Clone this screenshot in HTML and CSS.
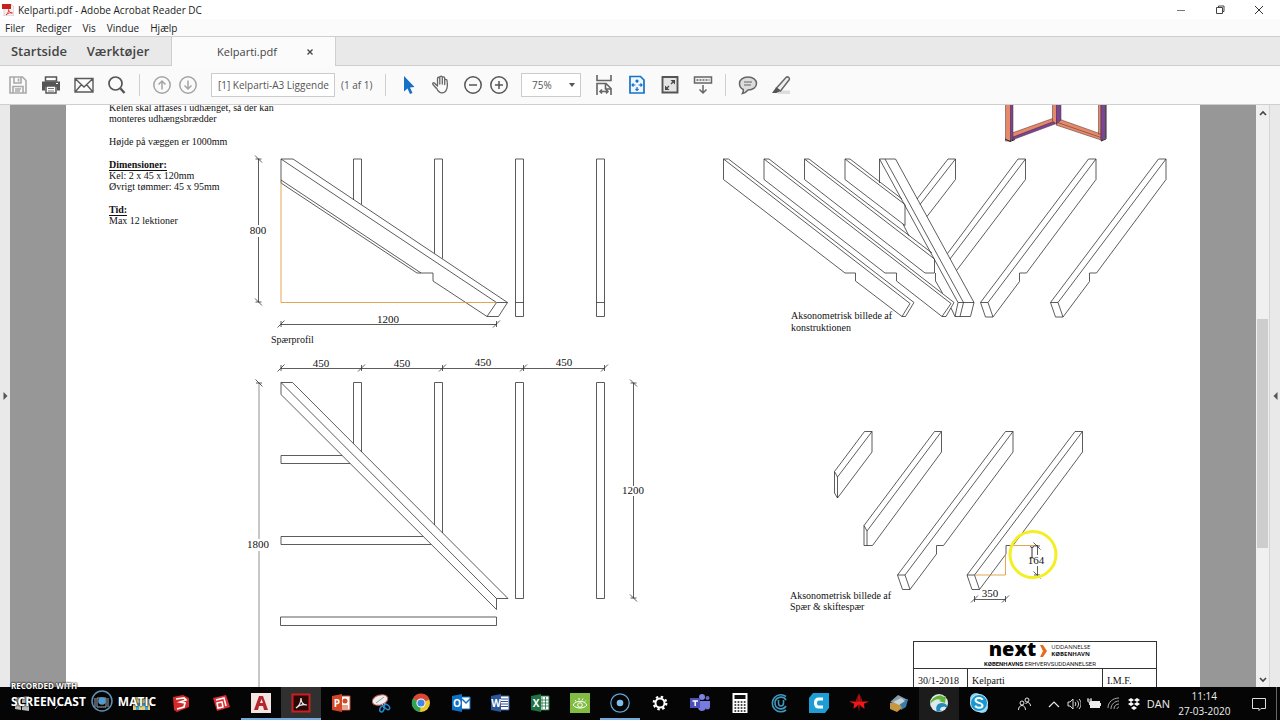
FILE: index.html
```html
<!DOCTYPE html>
<html lang="da">
<head>
<meta charset="utf-8">
<title>Kelparti.pdf - Adobe Acrobat Reader DC</title>
<link rel="stylesheet" href="styles.css">
</head>
<body>
<div class="screen">
  <header class="titlebar">
    <svg class="app-icon" viewBox="0 0 12 12"><path d="M2 0h7l3 3v9H2z" fill="#f4f1f1" stroke="#c9b5b5" stroke-width=".6"/><path d="M0 0h9v5H0z" fill="#c8201c"/><path d="M4 11c2-2 3-4 2.500-5.500C7 8 8.500 9 10.500 9 8 8.500 6 9 4 11z" fill="none" stroke="#d22" stroke-width=".8"/></svg>
    <span class="title-text">Kelparti.pdf - Adobe Acrobat Reader DC</span>
    <div class="window-controls">
      <button aria-label="Minimer"><svg viewBox="0 0 10 10"><path d="M1 5.500h8" stroke="#777" fill="none"/></svg></button>
      <button aria-label="Gendan"><svg viewBox="0 0 10 10"><path d="M1.500 2.500h6v6h-6zM3.500 2.500v-1.500h5.500v5.500h-1.500" stroke="#444" fill="none"/></svg></button>
      <button aria-label="Luk"><svg viewBox="0 0 10 10"><path d="M1 1l8 8M9 1l-8 8" stroke="#333" fill="none"/></svg></button>
    </div>
  </header>
  <nav class="menubar">
    <button>Filer</button><button>Rediger</button><button>Vis</button><button>Vindue</button><button>Hjælp</button>
  </nav>
  <div class="tabs">
    <button class="home-tab">Startside</button>
    <button class="tools-tab">Værktøjer</button>
    <div class="doc-tab"><button class="doc-name">Kelparti.pdf</button><button class="doc-close" aria-label="Luk fane"><svg viewBox="0 0 8 8"><path d="M1.500 1.500l5 5M6.500 1.500l-5 5" stroke="#444" stroke-width="1.300"/></svg></button></div>
  </div>
  <div class="toolbar">
    <div class="group wide">
      <button aria-label="Gem"><svg viewBox="0 0 24 24" fill="none" stroke="#a9a9a9" stroke-width="1.600"><path d="M4 4h12.500L20 7.500V20H4zM8 4v6h7V4M7 20v-6.500h10V20M9 16h6M9 18h5M12.500 5.500v3"/></svg></button>
      <button aria-label="Udskriv"><svg viewBox="0 0 24 24"><path d="M6.500 4h11v4h-11z" fill="#fff" stroke="#555" stroke-width="1.500"/><path d="M3 8.500h18v9h-3v-3.500H6v3.500H3z" fill="#555"/><path d="M7 13h10v7H7z" fill="#fff" stroke="#555" stroke-width="1.500"/><path d="M9 15.500h6M9 18h6" stroke="#777"/><path d="M17 10.500h2" stroke="#fff"/></svg></button>
      <button aria-label="E-mail"><svg viewBox="0 0 24 24" fill="none" stroke="#5a5a5a" stroke-width="1.400"><path d="M3 5.500h18v13.500H3zM3.500 6l8.500 8 8.500-8M3.500 18.500l6-7M20.500 18.500l-6-7"/></svg></button>
      <button aria-label="Søg"><svg viewBox="0 0 24 24" fill="none" stroke="#555"><circle cx="10.500" cy="10.500" r="6.500" stroke-width="1.700"/><path d="M15.500 15.500l4 4.500" stroke-width="2.400"/></svg></button>
    </div>
    <span class="sep"></span>
    <div class="group">
      <button aria-label="Forrige side"><svg viewBox="0 0 24 24" fill="none" stroke="#a4a4a4" stroke-width="1.500"><circle cx="12" cy="12" r="8.200"/><path d="M12 16.500V8M8.500 11.500L12 8l3.500 3.500"/></svg></button>
      <button aria-label="Næste side"><svg viewBox="0 0 24 24" fill="none" stroke="#a4a4a4" stroke-width="1.500"><circle cx="12" cy="12" r="8.200"/><path d="M12 7.500V16M8.500 12.500L12 16l3.500-3.500"/></svg></button>
    </div>
    <input class="page-field" aria-label="Side" value="[1] Kelparti-A3 Liggende">
    <span class="page-count">(1 af 1)</span>
    <span class="sep"></span>
    <div class="group wide">
      <button aria-label="Markering"><svg viewBox="0 0 24 24"><path d="M8 3v15.500l3.500-3 2.500 5.500 2.500-1-2.500-5.500 4.500-.5z" fill="#1670c8"/></svg></button>
      <button aria-label="Hånd"><svg viewBox="0 0 24 24" fill="none" stroke="#666" stroke-width="1.300"><path d="M7 15l-3-3.500c-1-1.300.5-2.300 1.600-1.300L8.500 13V5.500c0-1.700 2.300-1.700 2.300 0V11 4.300c0-1.700 2.500-1.700 2.500 0V11 5c0-1.600 2.400-1.600 2.400 0v6.500-4c0-1.600 2.300-1.600 2.300 0 .5 3.500.8 6.500-.5 9-1.500 4-7 5.500-10-1.500z" stroke-linejoin="round"/></svg></button>
    </div>
    <div class="group zoom-group">
      <button aria-label="Zoom ud"><svg viewBox="0 0 24 24" fill="none" stroke="#555" stroke-width="1.500"><circle cx="12" cy="12" r="8.200"/><path d="M8 12h8"/></svg></button>
      <button aria-label="Zoom ind"><svg viewBox="0 0 24 24" fill="none" stroke="#555" stroke-width="1.500"><circle cx="12" cy="12" r="8.200"/><path d="M8 12h8M12 8v8"/></svg></button>
    </div>
    <label class="zoom-box"><select aria-label="Zoom"><option>75%</option><option>100%</option></select><svg viewBox="0 0 6 4"><path d="M0 0h6L3 4z" fill="#555"/></svg></label>
    <div class="group wide">
      <button aria-label="Tilpas bredde"><svg viewBox="0 0 24 24" fill="none" stroke="#666" stroke-width="1.600"><path d="M5 2v5.500h14V2M5 22V10.500h9l5 5V22M13.500 11v5H19M8 18.500h8M10 16.500l-2 2 2 2M14 16.500l2 2-2 2"/></svg></button>
      <button aria-label="Tilpas side"><svg viewBox="0 0 24 24" fill="none" stroke="#1871c5"><path d="M5 3.500h10.500L19 7v13H5z" stroke-width="1.700" fill="#eef7ff"/><path d="M12 6.500v3.500M12 14v4M7 12h3.500M13.500 12H17M10.500 8.500L12 7l1.500 1.500M10.500 16l1.500 1.500 1.500-1.500M8.500 10.500L7 12l1.500 1.500M15.500 10.500L17 12l-1.500 1.500" stroke-width="1.200"/></svg></button>
      <button aria-label="Fuld skærm"><svg viewBox="0 0 24 24" stroke="#555"><path d="M4.500 4h15v15.500h-15z" fill="#e5e5e5" stroke-width="1.900"/><path d="M12.500 7H17v4.500zM7 12.500V17h4.500z" fill="#444" stroke="none"/><path d="M16 8l-3 3M8 16l3-3" stroke-width="1.500"/></svg></button>
      <button aria-label="Værktøjslinje"><svg viewBox="0 0 24 24" fill="none" stroke="#666" stroke-width="1.500"><path d="M3.500 4h17v6h-17z" fill="#f2f2f2"/><path d="M5.500 7h13" stroke-dasharray="2 1"/><path d="M12 12v8M8.500 16.500L12 20l3.500-3.500"/></svg></button>
    </div>
    <span class="sep"></span>
    <div class="group wide">
      <button aria-label="Kommentar"><svg viewBox="0 0 24 24" fill="#ddd" stroke="#666" stroke-width="1.500"><path d="M12 4c5 0 8.500 2.700 8.500 6.500S17 17 12 17c-1.200 1.500-3 3-5.500 3.500.8-1.300 1-2.500.8-4C5 15.500 3.500 13.500 3.500 10.500 3.500 6.700 7 4 12 4z"/><path d="M8 9h8M8 12h7" stroke-width="1.200"/></svg></button>
      <button aria-label="Fremhæv"><svg viewBox="0 0 24 24"><path d="M9 17.500h12V21H9z" fill="#ddd"/><path d="M7.500 15L17 4.500c1.500-1.500 4.500.5 3 2.500L11.500 18z" fill="#eee" stroke="#666" stroke-width="1.500"/><path d="M7 14.500l4.500 3.500-4 2H3z" fill="#555"/></svg></button>
    </div>
  </div>

  <main class="workspace">
    <button class="pane-strip" aria-label="Vis venstre panel"><svg viewBox="0 0 4 8"><path d="M0 0l4 4-4 4z" fill="#555"/></svg></button>
    <div class="canvas">
      <div class="sheet">
        <svg class="drawing" viewBox="66 105 1134 582">
          <defs>
            <g id="bar" ><path d="M0 0h8v157.500h-8zM0 143.500h8"/></g>
            <g id="rafter"><path d="M108 0h7.500v20.500L46 114h-7v8.500L12.500 158H5L0 143.500zM115.500 0L7.500 143.500l5 14.500M0 143.500h7.500"/></g>
            <g id="ht"><path d="M-3.500 3.500l7-7M0-3v6"/></g>
            <g id="vt"><path d="M-3.500-3.500l7 7M-3 0h6"/></g>
          </defs>
          <g class="ink">
            <!-- rafter profile -->
            <path d="M281 159h12l214.500 143.500-9 14H487L433 281v-8h-16L281 183zM281 159l215.500 143.500-9.500 14M496.500 302.500h11M281 180l140 93"/>
            <path d="M353.500 200v-41h8v45.500M434.500 253.500V159h8v99.500"/>
            <use href="#bar" x="515.500" y="159"/><use href="#bar" x="596.500" y="159"/>
            <path class="guide" d="M281 183v119.500h215.500"/>
            <!-- plan -->
            <path d="M281 382.500h11.500L508 598.500h-11.500V609.500L281 394.500zM281 382.500l215.500 216"/>
            <path d="M353.500 443.500v-61h8v69.500M434.500 525v-142.500h8V533M515.500 382.500h8v216h-8zM596.500 382.500h8v216h-8z"/>
            <path d="M342 455.500h-61v8h69M423 536.500H281v8h150M280.500 617h216v8.500h-216z"/>
            <!-- assembled axonometric view -->
            <path d="M723.500 159h5L914 302.500l-8.500 14H902L855.500 281v-8H845L723.500 179.500zM723.500 159L910 303.500l-8 13"/>
            <path d="M764 159h5L954 302.500l-8 14h-4L896.500 281v-8H885L764 179.500zM764 159l187 144.500-9 13"/>
            <path d="M932 253L809 159h-4.500v20.500L925 273h9.500v-14L804.500 159M935.500 273v8l7 12M902 199l-52-40h-5v20.500l60 46v-21L845 159M903 224l6 12"/>
            <path d="M879.500 183v-24h16L974 302.500l-3.500 14H955l3-14h16M879.500 159L958 302.500M885 159l78.500 143.500-3.500 14M951 308l4 8.500"/>
            <path d="M917 199l31-40h7.500v20.500L927 216.500M955.500 159L920 204.500M947.500 253.500L1018 159h7.500v20.500l-69 91M1025.500 159L950 259"/>
            <use href="#rafter" x="980.500" y="159"/><use href="#rafter" x="1050.500" y="159"/>
            <!-- separate rafters -->
            <path d="M864.500 431.500h7.500V452L837.500 498l-3-5v-21.500zM872 431.500L837.500 477v21M834.500 471.500l3 5.500"/>
            <path d="M934.500 431.500h7V452l-69 93.500H864v-20zM941.500 431.500L867 531v14.500M864 525.500l3 5.500"/>
            <use href="#rafter" x="897.500" y="431.500"/><use href="#rafter" x="967" y="431.500"/>
            <path class="guide" d="M975 575h30.500v-21M1012 545.500h25"/>
          </g>
          <g class="dims">
            <path d="M258.500 159v66M258.500 237v65M281 324.500h215.500M281 368.500h323.500M633.500 383v103M633.500 496v102M974.500 599.500h31M1037.500 545v10M1037.500 566v9"/>
            <path class="pale" d="M259 383v156M259 551v140"/>
            <use href="#vt" x="258.500" y="159"/><use href="#vt" x="258.500" y="302"/><use href="#vt" x="259" y="383"/><use href="#vt" x="633.500" y="383"/><use href="#vt" x="633.500" y="598"/><use href="#vt" x="1037" y="546"/><use href="#vt" x="1037" y="575"/>
            <use href="#ht" x="281" y="324"/><use href="#ht" x="496.500" y="324"/><use href="#ht" x="281" y="368"/><use href="#ht" x="361.500" y="368"/><use href="#ht" x="442.500" y="368"/><use href="#ht" x="523.500" y="368"/><use href="#ht" x="604.500" y="368"/><use href="#ht" x="974.500" y="599"/><use href="#ht" x="1005.500" y="599"/>
          </g>
          <g class="dim-text">
            <text x="258" y="234">800</text><text x="388" y="323">1200</text><text x="321" y="367">450</text><text x="402" y="367">450</text><text x="483" y="366">450</text><text x="564" y="366">450</text><text x="258" y="548">1800</text><text x="633" y="494">1200</text><text x="1036" y="564">164</text><text x="990" y="597">350</text>
          </g>
          <g class="captions">
            <text x="271" y="343">Spærprofil</text>
            <text x="791" y="319">Aksonometrisk billede af</text><text x="791" y="331">konstruktionen</text>
            <text x="790" y="599">Aksonometrisk billede af</text><text x="790" y="610">Spær &amp; skiftespær</text>
          </g>
          <!-- coloured frame model -->
          <g stroke="#4a2a35" stroke-width=".5">
            <path d="M1012 133l42-15 1 4-42 16z" fill="#e58a68"/><path d="M1013 137l42-16v3l-43 16z" fill="#7b4596"/>
            <path d="M1056 118l45 16v6l-45-15z" fill="#e58a68"/><path d="M1056 122l45 15.500" fill="none"/>
            <path d="M1005.500 104h5v37h-5z" fill="#e58a68"/><path d="M1010.500 104h2.500v35l-2.500 2z" fill="#7b4596"/>
            <path d="M1052.500 104h4v20l-4-3z" fill="#e58a68"/><path d="M1056.500 104h4.500v16l-4.500 4z" fill="#7b4596"/>
            <path d="M1098.500 104h2.500v30h-2.500z" fill="#e58a68"/><path d="M1101 104h4.500v34l-4.500 3z" fill="#7b4596"/>
          </g>
          <path d="M1005 139l5 2.500 5-2M1101 141l5-2v-35" fill="none" stroke="#222"/>
          <circle cx="1033" cy="554.500" r="23" fill="none" stroke="#f4ef25" stroke-width="3"/>
          <path d="M1030 546.500l2 1 2-1M1032 547v11M1030 558.500l2-1 2 1" fill="none" stroke="#333"/>
        </svg>
        <article class="notes">
          <p>Kelen skal affases i udhænget, så der kan<br>monteres udhængsbrædder</p>
          <p>Højde på væggen er 1000mm</p>
          <p><b>Dimensioner:</b><br>Kel: 2 x 45 x 120mm<br>Øvrigt tømmer: 45 x 95mm</p>
          <p><b>Tid:</b><br>Max 12 lektioner</p>
        </article>
        <table class="title-block">
          <colgroup><col class="narrow"><col><col class="narrow"></colgroup>
          <tr><td colspan="3" class="logo-cell"><div class="logo"><span class="next">next</span><svg viewBox="0 0 7 12"><path d="M0 0h3l4 6-4 6H0l3-6z" fill="#e86b1c"/></svg><span class="org">UDDANNELSE<br><b>KØBENHAVN</b></span></div><div class="school"><b>KØBENHAVNS</b> ERHVERVSUDDANNELSER</div></td></tr>
          <tr class="info"><td>30/1-2018</td><td>Kelparti</td><td>I.M.F.</td></tr>
        </table>
      </div>
    </div>
    <div class="scrollbar">
      <button aria-label="Rul op"><svg viewBox="0 0 8 8"><path d="M1 6l3-3 3 3" fill="none" stroke="#444" stroke-width="1.600"/></svg></button>
      <div class="track"><div class="thumb"></div></div>
      <button aria-label="Rul ned"><svg viewBox="0 0 8 8"><path d="M1 2l3 3 3-3" fill="none" stroke="#444" stroke-width="1.600"/></svg></button>
    </div>
    <button class="pane-strip right" aria-label="Vis højre panel"><svg viewBox="0 0 4 8"><path d="M4 0L0 4l4 4z" fill="#555"/></svg></button>
  </main>

  <footer class="taskbar">
    <div class="apps">
      <button aria-label="Start"><svg viewBox="0 0 20 20"><path d="M3 5l6-1v6H3zM10 4l7-1v7h-7zM3 11h6v6l-6-1zM10 11h7v7l-7-1z" fill="#bbb"/></svg></button>
      <button aria-label="Søg"><svg viewBox="0 0 20 20"><path d="M3 16l5-6" stroke="#aaa"/></svg></button>
      <button aria-label="Opgavevisning"><svg viewBox="0 0 20 20"><path d="M5 5h9v9H5zM16 5v9M3 5v9" fill="none" stroke="#aaa"/></svg></button>
      <button aria-label="Stifinder"><svg viewBox="0 0 20 20"><path d="M1 4h7l2 2h8v11H1z" fill="#e3cf79"/><path d="M4 10h12v7h-3v-4H7v4H4z" fill="#43a7da"/></svg></button>
      <button aria-label="SketchUp"><svg viewBox="0 0 20 20"><path d="M2 4l10-2 6 3v9l-12 5-3-2z" fill="#d52a2b"/><path d="M5 6l8-1 2 2-6 2 5 1-1 4-7 2" fill="none" stroke="#fff" stroke-width="1.700"/></svg></button>
      <button aria-label="LayOut"><svg viewBox="0 0 20 20"><path d="M2 5l13-3 4 12-13 4z" fill="#dc3037"/><path d="M5 7l8-2 2 8M6 10l5-1 1 5-5 1z" fill="none" stroke="#fff" stroke-width="1.500"/></svg></button>
      <button class="running" aria-label="AutoCAD"><svg viewBox="0 0 20 20"><path d="M0 0h20v20H0z" fill="#f3e6e2"/><path d="M3 17L8 3h4l5 14h-4l-1-4H8l-1 4zM9 10h3l-1.500-4z" fill="#b4262b" fill-rule="evenodd"/></svg></button>
      <button class="running active" aria-label="Acrobat Reader"><svg viewBox="0 0 20 20"><path d="M1.500 1.500h17v17h-17z" fill="#2b0806" stroke="#c92020" stroke-width="2"/><path d="M5 15c3-2 5-6 5-10 0 4 2 7 6 7-4-1-8 0-11 3z" fill="none" stroke="#eee" stroke-width="1.200"/></svg></button>
      <button aria-label="PowerPoint"><svg viewBox="0 0 20 20"><path d="M10 3h9v14h-9z" fill="#fff" stroke="#d24726"/><circle cx="14" cy="8" r="2.500" fill="#d24726"/><path d="M11 13h6M11 15h6" stroke="#d24726"/><path d="M1 3l10-2v18L1 17z" fill="#d24726"/><text class="office" x="6" y="14">P</text></svg></button>
      <button aria-label="Klippeværktøj"><svg viewBox="0 0 20 20"><ellipse cx="9" cy="7" rx="8" ry="5" fill="#eee" stroke="#b55" transform="rotate(-18 9 7)"/><path d="M5 10l8-6" stroke="#999"/><path d="M11 10l2 5M14 10l-1 5" stroke="#ccc"/><ellipse cx="11" cy="16" rx="2" ry="3" transform="rotate(25 11 16)" fill="none" stroke="#258ad0" stroke-width="1.500"/><ellipse cx="16" cy="14" rx="2" ry="3" transform="rotate(-50 16 14)" fill="none" stroke="#258ad0" stroke-width="1.500"/></svg></button>
      <button aria-label="Chrome"><svg viewBox="0 0 20 20"><circle cx="10" cy="10" r="9" fill="#e9c72d"/><path d="M10 10L2 5.500A9 9 0 0 1 18.500 6.500z" fill="#dc4735"/><path d="M10 10L2 5.500A9 9 0 0 0 9 19z" fill="#32a350"/><circle cx="10" cy="10" r="4.600" fill="#fff"/><circle cx="10" cy="10" r="3.600" fill="#4285e8"/></svg></button>
      <button aria-label="Outlook"><svg viewBox="0 0 20 20"><path d="M10 4h9v12h-9z" fill="#fff" stroke="#0f72c6"/><path d="M11 6l4 4 4-4" fill="none" stroke="#0f72c6" stroke-width="1.500"/><path d="M1 3l10-2v18L1 17z" fill="#0f72c6"/><text class="office" x="6" y="14">O</text></svg></button>
      <button aria-label="Word"><svg viewBox="0 0 20 20"><path d="M10 3h9v14h-9z" fill="#fff" stroke="#2b579a"/><path d="M11 6h7M11 8.500h7M11 11h7M11 13.500h7" stroke="#2b579a"/><path d="M1 3l10-2v18L1 17z" fill="#2b579a"/><text class="office" x="6" y="14">W</text></svg></button>
      <button aria-label="Excel"><svg viewBox="0 0 20 20"><path d="M10 3h9v14h-9z" fill="#fff" stroke="#217346"/><path d="M12 4v12M15.500 4v12M11 7h8M11 10h8M11 13h8" stroke="#217346" stroke-width=".8"/><path d="M1 3l10-2v18L1 17z" fill="#217346"/><text class="office" x="6" y="14">X</text></svg></button>
      <button aria-label="Øje"><svg viewBox="0 0 20 20"><path d="M0 0h20v20H0z" fill="#82bd43"/><path d="M3 12c3-5 11-5 14 0-3 4-11 4-14 0zM5 7l1 1.500M9 5v2M13 5.500l-1 2M16 7.500l-1 1" fill="none" stroke="#fff"/><circle cx="10" cy="12" r="2.300" fill="none" stroke="#fff"/></svg></button>
      <button class="running" aria-label="Screencast"><svg viewBox="0 0 20 20"><circle cx="10" cy="10" r="9.200" fill="none" stroke="#62a6d8" stroke-width="1.200"/><circle cx="10" cy="10" r="3.300" fill="#80bdea"/></svg></button>
      <button aria-label="Indstillinger"><svg viewBox="0 0 20 20"><circle cx="10" cy="10" r="4.500" fill="none" stroke="#fff" stroke-width="2"/><circle cx="10" cy="10" r="6.300" fill="none" stroke="#fff" stroke-width="2.200" stroke-dasharray="2.400 2.550"/></svg></button>
      <button aria-label="Teams"><svg viewBox="0 0 20 20"><circle cx="12" cy="4" r="3" fill="#8184df"/><circle cx="17.500" cy="5" r="2" fill="#6267c4"/><path d="M8 8h8v7c-1 4-7 4-8 0zM16 8h4v6c0 2-2 3-4 2z" fill="#777be0"/><path d="M0 5h10v10H0z" fill="#4b51b6"/><path d="M2.500 8H8M5.200 8v5" stroke="#fff" stroke-width="1.500"/></svg></button>
      <button aria-label="Lommeregner"><svg viewBox="0 0 20 20"><path d="M2.500 0h15v20h-15z" fill="#fff"/><path d="M4.500 2h11v4h-11z" fill="#111"/><path d="M4.500 9h11M4.500 12h11M4.500 15h11M4.500 18h11" stroke="#111" stroke-width="1.600" stroke-dasharray="1.700 1.400"/></svg></button>
      <button aria-label="Cura Connect"><svg viewBox="0 0 20 20" fill="none" stroke="#4197be" stroke-width="1.600"><path d="M16 3.500A8.500 8.500 0 1 0 16 17"/><path d="M16 7C13 2 5 4 5 10s8 8 11 3"/><path d="M8.500 7v3c0 4 5 4 5 0V7"/></svg></button>
      <button aria-label="Cura"><svg viewBox="0 0 20 20"><path d="M4 0h16v15l-4 5H0V5z" fill="#1c9dd6"/><path d="M14 6H9.500C5.500 6 5.500 14 9.500 14H14" fill="none" stroke="#fff" stroke-width="3"/></svg></button>
      <button aria-label="Stjerne"><svg viewBox="0 0 20 20"><path d="M9.300 8.500V3l.7-3 .7 3v5.500H20l-5 2.300.5 5-3-2-1.800-2.300L10 19l-.7-7.500L7.500 13.800l-3 2 .5-5L0 8.500z" fill="#ef1717"/><path d="M8.500 2v6.500H7zM11.500 2v6.500H13z" fill="#ef1717"/></svg></button>
      <button aria-label="Kort"><svg viewBox="0 0 20 20"><path d="M1 9L9 2l10 5-7 6z" fill="#839eae"/><path d="M10 9l9-3-2 8-5 3z" fill="#377caa"/><path d="M1 10h9l3 5-5 4-7-3z" fill="#c79641"/><path d="M4 9l8-4 4 3-6 4z" fill="#c6d2d4"/></svg></button>
      <button class="hover" aria-label="Globus"><svg viewBox="0 0 20 20"><circle cx="10" cy="10" r="9" fill="#dfe8ed"/><path d="M1 11c1-7 10-11 14-7l2-1-1 7-6-2 2-1c-4-2-7 0-11 4z" fill="#60b432"/><path d="M8 19c-2-5 0-9 5-9 4 0 6 3 5 5-2-2-7-2-7 2l2 1z" fill="#238bbb"/></svg></button>
      <button aria-label="Skype"><svg viewBox="0 0 20 20"><circle cx="7" cy="6" r="6" fill="#8bd5f4"/><circle cx="13" cy="14" r="6" fill="#8bd5f4"/><circle cx="10" cy="10" r="8.500" fill="#1798d2" stroke="#cceefa"/><path d="M13.500 7c-1-3-7-2.500-7 .3 0 3.200 7 2 7 5.200 0 3-6 3.200-7.200.2" fill="none" stroke="#fff" stroke-width="2"/></svg></button>
    </div>
    <div class="tray">
      <button class="people" aria-label="Kontakter"><svg viewBox="0 0 14 14" fill="none" stroke="#e8e8e8"><circle cx="5" cy="6" r="2"/><path d="M1.500 13c0-6 7-6 7 0"/><circle cx="10" cy="3" r="2"/><path d="M8.500 7c2-3 5-1 5 2"/></svg></button>
      <button aria-label="Vis skjulte ikoner"><svg viewBox="0 0 14 14" fill="none" stroke="#e8e8e8" stroke-width="1.200"><path d="M2 10l5-5 5 5"/></svg></button>
      <button aria-label="Lyd"><svg viewBox="0 0 14 14" fill="none" stroke="#ddd"><path d="M1 5h2l3-3v10L3 9H1zM8 5c1 1 1 3 0 4M10 3.500c2 2 2 5 0 7M12 2c3 3 2.500 7 0 10"/></svg></button>
      <button aria-label="Batteri"><svg viewBox="0 0 14 14"><path d="M3 4h10v7H3zM13 6h1v3h-1z" fill="#eee"/><path d="M0 3h5M1 1v4h3V1M2.500 5v3" fill="none" stroke="#ddd"/></svg></button>
      <button aria-label="Netværk"><svg viewBox="0 0 14 14" fill="none" stroke="#aaa"><path d="M1 11C1 5 6 1 12 1M4 12c0-5 4-8 8-8M7 12c0-3 2-5 5-5M10 12c0-1 1-2 2-2"/></svg></button>
      <button aria-label="Dropbox"><svg viewBox="0 0 14 14" fill="#fff"><path d="M4 1l3 2-3 2-3-2zM10 1l3 2-3 2-3-2zM4 5l3 2-3 2-3-2zM10 5l3 2-3 2-3-2zM7 9l3 2-3 2-3-2z"/></svg></button>
      <button class="lang">DAN</button>
      <div class="clock"><time>11:14</time><time>27-03-2020</time></div>
      <button class="notify" aria-label="Meddelelser"><svg viewBox="0 0 14 14" fill="none" stroke="#ddd"><path d="M.5 1.500h13v10H9l-2 2v-2H.5z"/></svg></button>
      <span class="desktop-edge"></span>
    </div>
  </footer>
  <div class="watermark">
    <div class="wm-small">RECORDED WITH</div>
    <div class="wm-large"><span>SCREENCAST</span><svg viewBox="0 0 22 22"><circle cx="11" cy="11" r="10" fill="none" stroke="#5e91b7" stroke-width="1.500"/><circle cx="11" cy="11" r="3.800" fill="#529bd2"/></svg><span>MATIC</span></div>
  </div>
</div>
</body>
</html>
```
FILE: styles.css
```css
* { box-sizing: border-box; }
body { margin: 0; font-family: "Open Sans", "Noto Sans", sans-serif; font-size: 10px; color: #222; background: #fff; }
button { border: 0; padding: 0; margin: 0; background: none; font: inherit; color: inherit; display: flex; align-items: center; justify-content: center; }
svg { display: block; }
.screen { position: relative; display: flex; flex-direction: column; height: 100vh; overflow: hidden; }

.titlebar { display: flex; align-items: center; height: 19px; flex: none; background: #fff; }
.app-icon { width: 12px; height: 12px; margin: 0 4px 0 2px; }
.title-text { flex: 1; white-space: nowrap; }
.window-controls { display: flex; padding-right: 2px; }
.window-controls button { width: 39px; height: 19px; }
.window-controls svg { width: 10px; height: 10px; }

.menubar { display: flex; align-items: center; gap: 11px; height: 17px; flex: none; padding-left: 5px; background: #fbfbfb; }

.tabs { display: flex; height: 30px; flex: none; background: #e9e9e9; border-top: 1px solid #cfcfcf; border-bottom: 1px solid #cfcfcf; font-size: 13px; color: #444; }
.home-tab, .tools-tab { font-weight: 600; }
.home-tab { width: 78px; }
.tools-tab { width: 80px; }
.doc-tab { display: flex; width: 165px; height: 29px; margin-left: 13px; background: #fbfbfb; border: solid #cfcfcf; border-width: 0 1px; }
.doc-name { flex: 1; padding-left: 24px; font-size: 11px; }
.doc-close { width: 24px; margin-right: 13px; }
.doc-close svg { width: 8px; height: 8px; }

.toolbar { display: flex; align-items: center; height: 39px; flex: none; padding-left: 6px; background: #fafafa; border-bottom: 1px solid #cfcfcf; color: #555; }
.group { display: flex; gap: 2px; }
.group.wide { gap: 9px; }
.group button, .group svg { width: 24px; height: 24px; }
.sep { width: 1px; height: 22px; margin: 0 10px; background: #cfcfcf; }
.page-field { width: 124px; height: 24px; margin: 0 6px 0 11px; padding: 0 0 0 6px; border: 1px solid #ccc; background: #fff; font: inherit; color: inherit; }
.page-count { width: 34px; white-space: nowrap; }
.zoom-group { margin-left: 8px; }
.zoom-box { position: relative; width: 60px; height: 24px; margin: 0 11px 0 10px; }
.zoom-box select { appearance: none; width: 100%; height: 100%; padding: 0 10px; border: 1px solid #ccc; border-radius: 0; background: #fff; font: inherit; color: inherit; }
.zoom-box svg { position: absolute; right: 6px; top: 10px; width: 6px; height: 4px; }

.workspace { display: flex; flex: 1; min-height: 0; }
.pane-strip { width: 10px; background: #e9e9e9; }
.pane-strip svg { width: 5px; height: 8px; }
.canvas { flex: 1; display: flex; padding: 0 56px; background: #979797; overflow: hidden; }
.sheet { position: relative; flex: 1; background: #fff; overflow: hidden; font-family: "Liberation Serif", serif; font-size: 10px; color: #111; }
.drawing { width: 1134px; height: 582px; }
.ink, .dims { fill: none; stroke: #333; stroke-width: 0.8px; }
.ink .guide { stroke: #dc8f28; }
.dims .pale { stroke: #777; }
.dim-text, .captions { fill: #111; font-size: 10px; }
.dim-text { font-size: 11px; text-anchor: middle; }
.notes { position: absolute; left: 43px; top: -3px; line-height: 11px; white-space: nowrap; }
.notes p { margin: 0 0 12px; }
.notes b { border-bottom: 1px solid #111; }
.title-block { position: absolute; left: 847px; top: 536px; width: 244px; border-collapse: collapse; table-layout: fixed; font-size: 10px; }
.title-block .narrow { width: 54px; }
.title-block td { padding: 0 4px; border: 1px solid #333; }
.title-block .logo-cell { height: 27px; padding: 0; }
.info td { height: 24px; }
.logo { display: flex; align-items: center; justify-content: center; gap: 4px; height: 18px; margin-left: 9px; font-family: "Open Sans", sans-serif; }
.logo svg { width: 7px; height: 12px; }
.next { font-size: 20px; line-height: 14px; height: 18px; font-weight: 800; color: #000; }
.org { font-size: 6px; line-height: 7px; }
.school { padding-left: 10px; text-align: center; font: 6px/8px Roboto, sans-serif; }

.scrollbar { display: flex; flex-direction: column; width: 14px; background: #f0f0f0; border-right: 1px solid #d5d5d5; }
.scrollbar button { height: 15px; }
.scrollbar svg { width: 8px; height: 8px; }
.track { flex: 1; display: flex; flex-direction: column; padding-top: 199px; }
.thumb { height: 65%; margin: 0 1px; background: #cdcdcd; }

.taskbar { display: flex; height: 33px; flex: none; background: #050505; color: #eee; }
.apps { display: flex; flex: 1; padding-left: 2px; }
.apps button { flex: 1; border-bottom: 2px solid transparent; }
.apps svg { width: 20px; height: 20px; }
.apps .running { border-color: #76a9dc; }
.apps .active { background: #303030; }
.apps .hover { background: #1c1c1c; }
.office { fill: #fff; font: bold 10px "Open Sans", sans-serif; text-anchor: middle; }
.tray { display: flex; align-items: center; width: 281px; padding-left: 18px; }
.tray button { width: 20px; height: 33px; }
.tray svg { width: 14px; height: 14px; }
.tray .people { width: 14px; margin-right: 13px; }
.tray .lang { width: 30px; font-size: 11px; }
.clock { display: flex; flex-direction: column; width: 62px; text-align: center; line-height: 15px; font-size: 10px; }
.tray .notify { margin-left: 7px; width: 34px; }
.desktop-edge { width: 1px; height: 33px; margin-left: auto; margin-right: 3px; background: #666; }

.watermark { position: absolute; left: 11px; bottom: 8px; color: #fff; font-weight: 700; text-shadow: 0 0 2px #000, 0 0 2px #000; white-space: nowrap; }
.wm-small { font-size: 8px; line-height: 8px; }
.wm-large { display: flex; align-items: center; gap: 5px; font-size: 12px; height: 22px; }
.wm-large svg { width: 22px; height: 22px; }
```
